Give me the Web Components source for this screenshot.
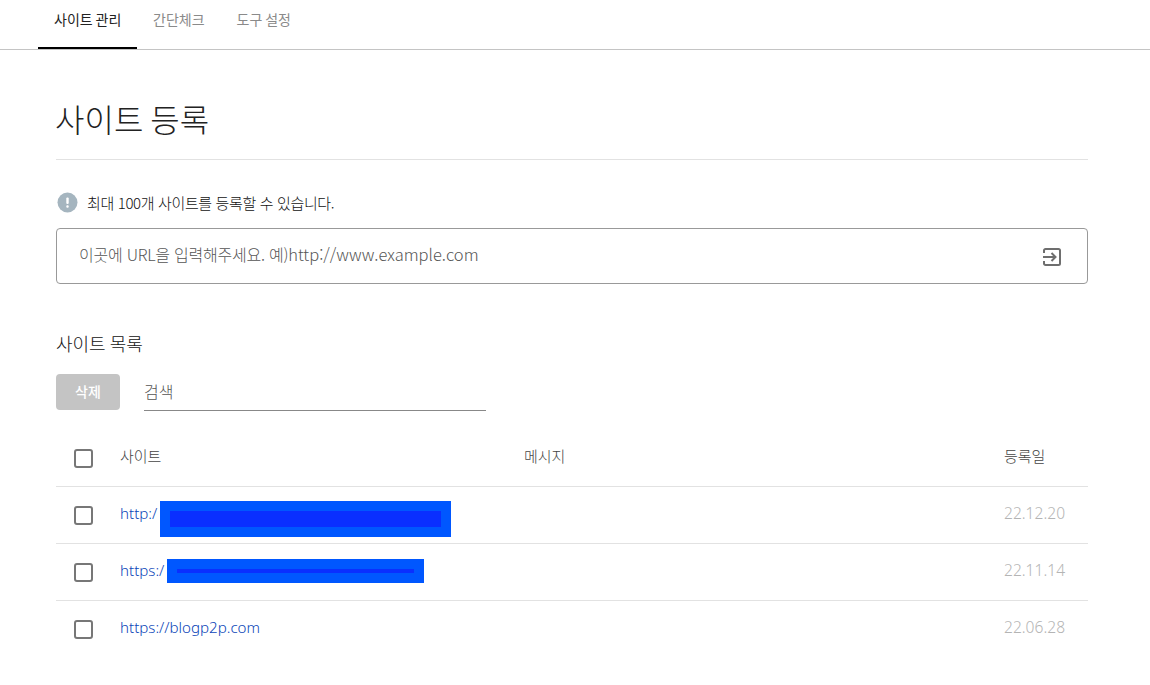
<!DOCTYPE html>
<html lang="ko">
<head>
<meta charset="utf-8">
<title>사이트 등록</title>
<style>
  html, body { margin: 0; padding: 0; background: #fff; }
  body { font-family: "Noto Sans CJK KR", "Noto Sans", sans-serif; color: #222; overflow: hidden; }
</style>
</head>
<body>
<site-tabs></site-tabs>
<site-page>
  <page-title>사이트 등록</page-title>
  <url-form></url-form>
  <site-list>
    <site-row url="http:/" date="22.12.20" mask="wide"></site-row>
    <site-row url="https:/" date="22.11.14" mask="thin"></site-row>
    <site-row url="https://blogp2p.com" date="22.06.28"></site-row>
  </site-list>
</site-page>

<script>
const checkStyles = `
  .check {
    box-sizing: border-box;
    width: 19px;
    height: 19px;
    margin-left: 18px;
    border: 2px solid #777;
    border-radius: 3px;
    background: #fff;
  }
`;

class SiteTabs extends HTMLElement {
  connectedCallback() {
    this.attachShadow({ mode: 'open' });
    this.shadowRoot.innerHTML = `
      <style>
        :host {
          display: flex;
          height: 49px;
          padding-left: 38px;
          border-bottom: 1px solid #c4c4c4;
          font-size: 14px;
          word-spacing: -1px;
        }
        a {
          box-sizing: border-box;
          height: 49px;
          padding: 10px 16px 0;
          color: #8a8a8a;
          text-decoration: none;
          line-height: 19px;
          white-space: nowrap;
        }
        a.on {
          width: 99px;
          color: #222;
          border-bottom: 2px solid #000;
        }
      </style>
      <a class="on" href="#">사이트 관리</a>
      <a href="#">간단체크</a>
      <a href="#">도구 설정</a>
    `;
  }
}

class SitePage extends HTMLElement {
  connectedCallback() {
    this.attachShadow({ mode: 'open' });
    this.shadowRoot.innerHTML = `
      <style>
        :host {
          display: block;
          padding: 0 62px 0 56px;
        }
      </style>
      <slot></slot>
    `;
  }
}

class PageTitle extends HTMLElement {
  connectedCallback() {
    this.attachShadow({ mode: 'open' });
    this.shadowRoot.innerHTML = `
      <style>
        :host {
          display: block;
          height: 110px;
          box-sizing: border-box;
          padding-top: 45px;
          border-bottom: 1px solid #e2e2e2;
          font-size: 32px;
          font-weight: 300;
          line-height: 46px;
          word-spacing: -2px;
          text-indent: -1px;
          color: #222;
        }
      </style>
      <slot></slot>
    `;
  }
}

class UrlForm extends HTMLElement {
  connectedCallback() {
    this.attachShadow({ mode: 'open' });
    this.shadowRoot.innerHTML = `
      <style>
        :host {
          display: block;
          padding-top: 31px;
        }
        .notice {
          display: flex;
          align-items: center;
          gap: 9px;
          height: 22px;
          padding-left: 1px;
          font-size: 15px;
          font-weight: 300;
          letter-spacing: -0.36px;
          color: #111;
        }
        .notice span { margin-top: 1px; }
        .box {
          display: flex;
          align-items: center;
          justify-content: space-between;
          box-sizing: border-box;
          height: 56px;
          margin-top: 15px;
          padding: 0 25px 0 22px;
          border: 1px solid #999;
          border-radius: 4px;
          font-size: 16.5px;
          font-weight: 300;
          color: #555;
        }
        .box > span { margin-top: -4px; }
        .box b { font-size: 16px; font-weight: 300; letter-spacing: -0.24px; }
        .box svg { margin-top: 2px; }
        svg { display: block; flex: none; }
      </style>
      <div class="notice">
        <svg width="21" height="21" viewBox="0 0 21 21">
          <circle cx="10.5" cy="10.5" r="10" fill="#a5b5bf"/>
          <rect x="9.3" y="5.5" width="2.4" height="6.5" rx="1" fill="#fff"/>
          <rect x="9.3" y="13.3" width="2.4" height="2.4" rx="1" fill="#fff"/>
        </svg>
        <span>최대 100개 사이트를 등록할 수 있습니다.</span>
      </div>
      <div class="box">
        <span><b>이곳에 URL을 입력해주세요. 예)</b>http://www.example.com</span>
        <svg width="20" height="20" viewBox="0 0 20 20" fill="none" stroke="#6e6e6e" stroke-width="2">
          <path d="M2 6V3.5C2 2.700 2.700 2 3.500 2H16.500C17.300 2 18 2.700 18 3.500V16.500C18 17.300 17.300 18 16.500 18H3.500C2.700 18 2 17.300 2 16.500V14"/>
          <path d="M1 10H13M9.500 6l4 4-4 4"/>
        </svg>
      </div>
    `;
  }
}

class SiteList extends HTMLElement {
  connectedCallback() {
    this.attachShadow({ mode: 'open' });
    this.shadowRoot.innerHTML = `
      <style>
        :host {
          display: block;
          padding-top: 45px;
        }
        ${checkStyles}
        h2 {
          margin: 0;
          font-size: 18px;
          font-weight: 300;
          line-height: 28px;
          word-spacing: -1px;
          color: #111;
        }
        .tools {
          display: flex;
          gap: 24px;
          margin-top: 17px;
        }
        button {
          width: 64px;
          height: 36px;
          padding: 0 0 2px;
          border: 0;
          border-radius: 4px;
          background: #c4c4c4;
          color: #fff;
          font: 500 14px "Noto Sans CJK KR", sans-serif;
        }
        .search {
          box-sizing: border-box;
          width: 342px;
          height: 37px;
          border-bottom: 1px solid #888;
          font-size: 16px;
          font-weight: 300;
          line-height: 34px;
          color: #555;
        }
        .head {
          display: grid;
          grid-template-columns: 64px 404px 480px 1fr;
          align-items: center;
          height: 76px;
          box-sizing: border-box;
          padding-top: 18px;
          border-bottom: 1px solid #e2e2e2;
          font-size: 15px;
          font-weight: 300;
          color: #444;
        }
        .head span { margin-top: -4px; }
        .head .check { margin-top: 1px; }
      </style>
      <h2>사이트 목록</h2>
      <div class="tools">
        <button>삭제</button>
        <div class="search">검색</div>
      </div>
      <div class="head">
        <div class="check"></div>
        <span>사이트</span>
        <span>메시지</span>
        <span>등록일</span>
      </div>
      <slot></slot>
    `;
  }
}

class SiteRow extends HTMLElement {
  connectedCallback() {
    this.attachShadow({ mode: 'open' });
    const mask = this.getAttribute('mask');
    this.shadowRoot.innerHTML = `
      <style>
        :host {
          display: grid;
          grid-template-columns: 64px 884px 1fr;
          align-items: center;
          position: relative;
          box-sizing: border-box;
          height: 57px;
          border-bottom: 1px solid #e2e2e2;
          font-size: 14px;
        }
        :host(:last-child) { border-bottom: 0; }
        ${checkStyles}
        a {
          color: #0b45b8;
          text-decoration: none;
          font-family: "Noto Sans", sans-serif;
          font-size: 15.1px;
          font-weight: 300;
          margin-top: -5px;
        }
        .date {
          color: #b4b4b4;
          font-family: "Noto Sans", sans-serif;
          font-size: 15.6px;
          font-weight: 300;
          margin-top: -5px;
        }
        .mask {
          position: absolute;
          box-sizing: border-box;
          padding: 10px;
          background: #0057ff;
        }
        .mask div { height: 100%; background: #0a2fff; }
        .wide { left: 104px; top: 14px; width: 291px; height: 36px; }
        .thin { left: 111px; top: 15px; width: 257px; height: 24px; }
      </style>
      <div class="check"></div>
      <a href="#">${this.getAttribute('url')}</a>
      <span class="date">${this.getAttribute('date')}</span>
      ${mask ? `<div class="mask ${mask}"><div></div></div>` : ''}
    `;
  }
}

customElements.define('site-tabs', SiteTabs);
customElements.define('site-page', SitePage);
customElements.define('page-title', PageTitle);
customElements.define('url-form', UrlForm);
customElements.define('site-list', SiteList);
customElements.define('site-row', SiteRow);
</script>
</body>
</html>
